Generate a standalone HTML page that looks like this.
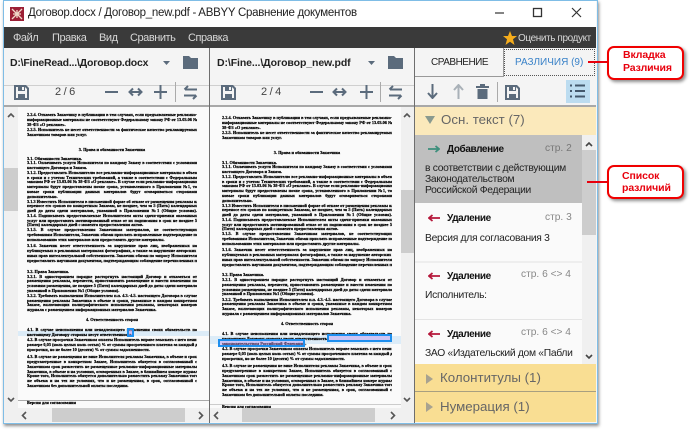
<!DOCTYPE html>
<html lang="ru"><head><meta charset="utf-8"><title>ABBYY</title>
<style>
html,body{margin:0;padding:0;background:#fff}
body{width:690px;height:430px;position:relative;overflow:hidden;font-family:"Liberation Sans",sans-serif}
div,span,svg{position:absolute}
#win{left:3px;top:0;width:593px;height:422px;background:#f5f5f5;border:1px solid #7fbde6;box-shadow:1px 2px 3px rgba(0,0,0,.45);box-sizing:content-box}
.t{white-space:nowrap}
.m{white-space:nowrap;top:31px;font-size:11px;line-height:15px;color:#d8d8d8;letter-spacing:-.45px}
.d{position:absolute;left:0;right:0;height:5px;font:bold 4.3px/5px "Liberation Serif",serif;color:#000;-webkit-text-stroke:.22px #000;white-space:nowrap;overflow:hidden;text-align:justify;text-align-last:justify}
.d.s{text-align-last:left}.d.h{text-align-last:center}
.ic{fill:#5b6b7c}
.st{stroke:#5b6b7c;stroke-width:2;fill:none}
.call{background:#fff;border:2px solid #f00000;border-radius:7px;box-shadow:2px 2px 3px rgba(0,0,0,.45);box-sizing:border-box;color:#e8000d;font:bold 10.5px/13px "Liberation Sans",sans-serif;text-align:left;letter-spacing:-.1px}
.it{font-size:10.3px;letter-spacing:-.3px;color:#222;white-space:nowrap}
.b{font-weight:bold;font-size:10px;letter-spacing:-.4px;color:#111}
.pg{font-size:10.2px;color:#888;white-space:nowrap}
.hd{font-size:13.3px;color:#666;white-space:nowrap}
.pn{font-size:11px;letter-spacing:-.3px;line-height:15px;color:#444;white-space:nowrap}
</style></head><body>
<svg width="0" height="0" style="left:0;top:0"><defs>
<g id="save"><path class="ic" fill-rule="evenodd" d="M0 0H12L15 3V15H0ZM2 2V13H13V4L11 2V6H4V2ZM8 2V5H10V2ZM4 9H11V13H4Z"/></g>
<g id="folder"><path class="ic" d="M0 0H6L8 2H15V13H0Z"/></g>
<g id="swap"><path class="st" d="M2 4.5H14M5 1L1.5 4.5M1 10.5H13M10 14L13.5 10.5"/></g>
<g id="ar"><path class="st" d="M2 5H13M5 1.5L1.5 5L5 8.5M10 1.5L13.500 5L10 8.5"/></g>
</defs></svg>

<div id="win"></div>
<!-- title bar -->
<div style="left:4px;top:1px;width:592px;height:26px;background:#fff"></div>
<svg style="left:10px;top:7px" width="14" height="14" viewBox="0 0 14 14"><rect width="14" height="14" fill="#9c1f35"/><path d="M2 2L12 12M12 2L2 12M7 3V11M3 7H11" stroke="#f0d8c8" stroke-width="1.3" fill="none"/></svg>
<div class="t" style="left:28px;top:6px;font-size:11.5px;letter-spacing:-.28px;line-height:15px;color:#222">Договор.docx / Договор_new.pdf - ABBYY Сравнение документов</div>
<svg style="left:490px;top:6px" width="100" height="14" viewBox="0 0 100 14"><path d="M5 7H14" stroke="#333" stroke-width="1.200"/><rect x="43.500" y="2.500" width="8" height="8" fill="none" stroke="#333" stroke-width="1.300"/><path d="M82 2L91 11M91 2L82 11" stroke="#333" stroke-width="1.200"/></svg>

<!-- menu -->
<div style="left:4px;top:27px;width:592px;height:21px;background:#3a3a3a"></div>
<div class="m" style="left:13px">Файл</div>
<div class="m" style="left:52px">Правка</div>
<div class="m" style="left:99px">Вид</div>
<div class="m" style="left:130px">Сравнить</div>
<div class="m" style="left:188px">Справка</div>
<svg style="left:503px;top:31px" width="14" height="14" viewBox="0 0 14 14"><path fill="#f6ad1c" d="M7 0L9 5H14L10 8.300L11.500 14L7 10.700L2.500 14L4 8.300L0 5H5Z"/></svg>
<div class="m" style="left:518px;font-size:10px;letter-spacing:-.4px">Оценить продукт</div>

<!-- address rows -->
<div style="left:4px;top:48px;width:592px;height:57px;background:#f4f4f4"></div>
<div style="left:4px;top:85px;width:410px;height:1px;background:#cfcfcf"></div>
<div style="left:4px;top:105px;width:592px;height:2px;background:#a8a8a8"></div>
<div style="left:209px;top:48px;width:1px;height:375px;background:#6e6e6e"></div>
<div style="left:414px;top:48px;width:1px;height:375px;background:#6e6e6e"></div>
<div class="t" style="left:10px;top:56px;font-weight:bold;font-size:10.5px;letter-spacing:-.22px;line-height:15px;color:#222">D:\FineRead...\Договор.docx</div>
<svg style="left:163px;top:61px" width="7" height="4"><path d="M0 0H7L3.500 4Z" fill="#5b6b7c"/></svg>
<svg style="left:183px;top:56px" width="15" height="13"><use href="#folder"/></svg>
<div class="t" style="left:217px;top:56px;font-weight:bold;font-size:10.5px;letter-spacing:-.1px;line-height:15px;color:#222">D:\Fine...\Договор_new.pdf</div>
<svg style="left:368px;top:61px" width="7" height="4"><path d="M0 0H7L3.500 4Z" fill="#5b6b7c"/></svg>
<svg style="left:388px;top:56px" width="15" height="13"><use href="#folder"/></svg>

<!-- toolbar left -->
<svg style="left:14px;top:85px" width="15" height="15"><use href="#save"/></svg>
<div class="pn" style="left:55px;top:85px">2 / 6</div>
<svg style="left:105px;top:87px" width="14" height="10"><path class="st" d="M0 5H13"/></svg>
<svg style="left:128px;top:87px" width="15" height="10"><use href="#ar"/></svg>
<svg style="left:154px;top:85px" width="13" height="14"><path class="st" d="M0 7H13M6.500 0V14"/></svg>
<div style="left:175px;top:82px;width:1px;height:20px;background:#aaa"></div>
<svg style="left:183px;top:85px" width="15" height="15"><use href="#swap"/></svg>
<!-- toolbar mid -->
<svg style="left:221px;top:85px" width="15" height="15"><use href="#save"/></svg>
<div class="pn" style="left:261px;top:85px">2 / 4</div>
<svg style="left:310px;top:87px" width="14" height="10"><path class="st" d="M0 5H13"/></svg>
<svg style="left:332px;top:87px" width="15" height="10"><use href="#ar"/></svg>
<svg style="left:360px;top:85px" width="13" height="14"><path class="st" d="M0 7H13M6.500 0V14"/></svg>
<div style="left:380px;top:82px;width:1px;height:20px;background:#aaa"></div>
<svg style="left:388px;top:85px" width="15" height="15"><use href="#swap"/></svg>

<!-- tabs -->
<div style="left:415px;top:48px;width:89px;height:29px;background:#f4f4f4;border-right:1px solid #999;border-bottom:1px solid #999;box-sizing:border-box"></div>
<div class="t" style="left:431px;top:55px;font-size:10px;letter-spacing:-.5px;line-height:15px;color:#222">СРАВНЕНИЕ</div>
<div style="left:504px;top:49px;width:91px;height:27px;border:1px dotted #555;box-sizing:border-box;background:#f4f4f4"></div>
<div class="t" style="left:515px;top:55px;font-size:10px;line-height:15px;color:#3a82c8">РАЗЛИЧИЯ (9)</div>
<!-- panel toolbar -->
<svg style="left:427px;top:84px" width="11" height="15"><path d="M5.500 0V13M1 9L5.500 14L10 9" fill="none" stroke="#5b6b7c" stroke-width="2"/></svg>
<svg style="left:453px;top:84px" width="11" height="15"><path d="M5.500 15V2M1 6L5.500 1L10 6" fill="none" stroke="#a9b1b8" stroke-width="2"/></svg>
<svg style="left:476px;top:84px" width="13" height="15"><path class="ic" d="M4 0H9V2H13V4H0V2H4ZM1.500 5H11.500V15H1.500Z"/></svg>
<div style="left:497px;top:82px;width:1px;height:20px;background:#aaa"></div>
<svg style="left:505px;top:85px" width="15" height="15"><use href="#save"/></svg>
<div style="left:566px;top:80px;width:24px;height:23px;background:#bcdcf0"></div>
<svg style="left:570px;top:84px" width="16" height="14"><path d="M0 1.500H2M5 1.500H15M5 7H15M0 7H2M0 12.500H2M5 12.500H15" stroke="#44586c" stroke-width="2"/></svg>

<!-- left doc -->
<div style="left:4px;top:107px;width:205px;height:315px;background:#fafafa"></div>
<div style="left:18px;top:331px;width:191px;height:5px;background:#dcecf8"></div>
<div style="left:18px;top:400px;width:191px;height:1px;background:#aaa"></div>
<div style="left:27px;top:0;width:170px;height:405px;overflow:hidden">
<div class="d" style="top:112px">2.2.4. Отказать Заказчику в публикации в тем случаях, если предъявляемые рекламно-</div>
<div class="d" style="top:117px">информационные материалы не соответствуют Федеральному закону РФ от 13.03.06 №</div>
<div class="d s" style="top:122px">38-ФЗ «О рекламе».</div>
<div class="d" style="top:127px">2.2.5. Исполнитель не несет ответственности за фактическое качество рекламируемых</div>
<div class="d s" style="top:132px">Заказчиком товаров или услуг.</div>
<div class="d h" style="top:147px">3. Права и обязанности Заказчика</div>
<div class="d s" style="top:156px">3.1. Обязанности Заказчика.</div>
<div class="d" style="top:160px">3.1.1. Оплачивать услуги Исполнителя по каждому Заказу в соответствии с условиями</div>
<div class="d s" style="top:165px">настоящего Договора и Заказа.</div>
<div class="d" style="top:170px">3.1.2. Предоставлять Исполнителю все рекламно-информационные материалы в объеме,</div>
<div class="d" style="top:175px">в сроки и с учетом Технических требований, а также в соответствии с Федеральным</div>
<div class="d" style="top:179px">законом РФ от 13.03.06 № 38-ФЗ «О рекламе». В случае если рекламно-информационные</div>
<div class="d" style="top:184px">материалы будут предоставлены позже срока, установленного в Приложении №1, то</div>
<div class="d" style="top:189px">новые сроки публикации данных материалов будут оговариваться сторонами</div>
<div class="d s" style="top:194px">дополнительно.</div>
<div class="d" style="top:199px">3.1.3 Известить Исполнителя в письменной форме об отказе от размещения рекламы или</div>
<div class="d" style="top:203px">переносе его сроков по конкретным Заказам, не позднее, чем за 5 (Пять) календарных</div>
<div class="d" style="top:208px">дней до даты сдачи материалов, указанной в Приложении №1 (Общие условия).</div>
<div class="d" style="top:213px">3.1.4. Подписывать предоставляемые Исполнителем акты сдачи-приемки оказанных</div>
<div class="d" style="top:218px">услуг или предоставить мотивированный отказ от их подписания в срок не позднее 5</div>
<div class="d s" style="top:222px">(Пяти) календарных дней с момента предоставления актов.</div>
<div class="d" style="top:227px">3.1.5. В случае предоставления Заказчиком материалов, не соответствующих</div>
<div class="d" style="top:232px">требованиям Исполнителя, Заказчик обязан прислать исправленные подтверждение по</div>
<div class="d s" style="top:237px">использованию этих материалов или предоставить другие материалы.</div>
<div class="d" style="top:243px">3.1.6. Заказчик несет ответственность за нарушение прав лиц, изображенных на</div>
<div class="d" style="top:248px">публикуемых в рекламных материалах фотографиях, а также за нарушение авторских и</div>
<div class="d" style="top:253px">иных прав интеллектуальной собственности. Заказчик обязан по запросу Исполнителя</div>
<div class="d" style="top:258px">предоставлять научными документам, подтверждающим соблюдение перечисленных прав.</div>
<div class="d s" style="top:269px">3.2. Права Заказчика.</div>
<div class="d" style="top:274px">3.2.1. В одностороннем порядке расторгнуть настоящий Договор и отказаться от</div>
<div class="d" style="top:278px">размещения рекламы, перенести, приостановить размещение и внести изменения по</div>
<div class="d" style="top:283px">условиям размещения, не позднее 5 (Пяти) календарных дней до даты сдачи материалов,</div>
<div class="d s" style="top:288px">указанной в Приложении №1 (Общие условия).</div>
<div class="d" style="top:293px">3.2.2. Требовать выполнения Исполнителем п.п. 4.3.-4.5. настоящего Договора в случае</div>
<div class="d" style="top:298px">размещения рекламы Заказчика в объеме и сроки, указанные в каждом конкретном</div>
<div class="d" style="top:302px">Заказе, включающих полиграфического исполнения рекламы, некоторых номеров</div>
<div class="d s" style="top:307px">журнала с размещением информационных материалов Заказчика.</div>
<div class="d h" style="top:317px">4. Ответственность сторон</div>
<div class="d" style="top:327px">4.1. В случае неисполнения или ненадлежащего исполнения своих обязательств по</div>
<div class="d s" style="top:332px">настоящему Договору стороны несут ответственность.</div>
<div class="d" style="top:337px">4.2. В случае просрочки Заказчиком оплаты Исполнитель вправе взыскать с него пени в</div>
<div class="d" style="top:342px">размере 0,03 (ноль целых ноль сотых) % от суммы просроченного платежа за каждый день</div>
<div class="d s" style="top:347px">просрочки, но не более 10 (десяти) % от суммы задолженности.</div>
<div class="d" style="top:354px">4.3. В случае не размещения не вине Исполнителя рекламы Заказчика, в объеме и сроки,</div>
<div class="d" style="top:359px">предусмотренные в конкретном Заказе, Исполнитель обязуется в согласованный с</div>
<div class="d" style="top:364px">Заказчиком срок разместить не размещенные рекламно-информационные материалы</div>
<div class="d" style="top:369px">Заказчика, в объеме и на условиях, оговоренных в Заказе, в ближайшем номере журнала.</div>
<div class="d" style="top:373px">Кроме того, Исполнитель обязуется дополнительно разместить рекламу Заказчика того</div>
<div class="d" style="top:378px">же объема и на тех же условиях, что и не размещенная, в срок, согласованный с</div>
<div class="d s" style="top:383px">Заказчиком без дополнительной оплаты последним.</div>
<div class="d s" style="top:400px">Версия для согласования</div>
</div>
<div style="left:127px;top:328px;width:7px;height:9px;border:2px solid #1f8fee;box-sizing:border-box;background:rgba(190,150,240,.5)"></div>
<!-- left scrollbars -->
<div style="left:4px;top:107px;width:14px;height:301px;background:#f0f0f0"></div>
<div style="left:4px;top:168px;width:14px;height:43px;background:#cdcdcd"></div>
<svg style="left:7px;top:112px" width="8" height="6"><path d="M1 5L4 2L7 5" fill="none" stroke="#555" stroke-width="1.600"/></svg>
<svg style="left:7px;top:397px" width="8" height="6"><path d="M1 1L4 4L7 1" fill="none" stroke="#555" stroke-width="1.600"/></svg>
<div style="left:4px;top:408px;width:205px;height:14px;background:#f0f0f0"></div>
<div style="left:52px;top:408px;width:133px;height:14px;background:#cdcdcd"></div>
<svg style="left:21px;top:411px" width="6" height="9"><path d="M5 1L1.500 4.500L5 8" fill="none" stroke="#555" stroke-width="1.600"/></svg>
<svg style="left:198px;top:411px" width="6" height="9"><path d="M1 1L4.500 4.500L1 8" fill="none" stroke="#555" stroke-width="1.600"/></svg>

<!-- mid doc -->
<div style="left:210px;top:107px;width:204px;height:315px;background:#fafafa"></div>
<div style="left:210px;top:336px;width:191px;height:8px;background:#dcecf8"></div>
<div style="left:210px;top:404px;width:191px;height:1px;background:#ccc"></div>
<div style="left:222px;top:0;width:170px;height:408px;overflow:hidden">
<div class="d" style="top:115px">2.2.4. Отказать Заказчику в публикации в тем случаях, если предъявляемые рекламно-</div>
<div class="d" style="top:120px">информационные материалы не соответствуют Федеральному закону РФ от 13.03.06 №</div>
<div class="d s" style="top:125px">38-ФЗ «О рекламе».</div>
<div class="d" style="top:130px">2.2.5. Исполнитель не несет ответственности за фактическое качество рекламируемых</div>
<div class="d s" style="top:135px">Заказчиком товаров или услуг.</div>
<div class="d h" style="top:150px">3. Права и обязанности Заказчика</div>
<div class="d s" style="top:160px">3.1. Обязанности Заказчика.</div>
<div class="d" style="top:164px">3.1.1. Оплачивать услуги Исполнителя по каждому Заказу в соответствии с условиями</div>
<div class="d s" style="top:169px">настоящего Договора и Заказа.</div>
<div class="d" style="top:174px">3.1.2. Предоставлять Исполнителю все рекламно-информационные материалы в объеме,</div>
<div class="d" style="top:179px">в сроки и с учетом Технических требований, а также в соответствии с Федеральным</div>
<div class="d" style="top:183px">законом РФ от 13.03.06 № 38-ФЗ «О рекламе». В случае если рекламно-информационные</div>
<div class="d" style="top:188px">материалы будут предоставлены позже срока, установленного в Приложении №1, то</div>
<div class="d" style="top:193px">новые сроки публикации данных материалов будут оговариваться сторонами</div>
<div class="d s" style="top:198px">дополнительно.</div>
<div class="d" style="top:203px">3.1.3 Известить Исполнителя в письменной форме об отказе от размещения рекламы или</div>
<div class="d" style="top:207px">переносе его сроков по конкретным Заказам, не позднее, чем за 5 (Пять) календарных</div>
<div class="d" style="top:212px">дней до даты сдачи материалов, указанной в Приложении №1 (Общие условия).</div>
<div class="d" style="top:217px">3.1.4. Подписывать предоставляемые Исполнителем акты сдачи-приемки оказанных</div>
<div class="d" style="top:222px">услуг или предоставить мотивированный отказ от их подписания в срок не позднее 5</div>
<div class="d s" style="top:226px">(Пяти) календарных дней с момента предоставления актов.</div>
<div class="d" style="top:231px">3.1.5. В случае предоставления Заказчиком материалов, не соответствующих</div>
<div class="d" style="top:236px">требованиям Исполнителя, Заказчик обязан прислать исправленные подтверждение по</div>
<div class="d s" style="top:241px">использованию этих материалов или предоставить другие материалы.</div>
<div class="d" style="top:247px">3.1.6. Заказчик несет ответственность за нарушение прав лиц, изображенных на</div>
<div class="d" style="top:252px">публикуемых в рекламных материалах фотографиях, а также за нарушение авторских и</div>
<div class="d" style="top:257px">иных прав интеллектуальной собственности. Заказчик обязан по запросу Исполнителя</div>
<div class="d" style="top:262px">предоставлять научными документам, подтверждающим соблюдение перечисленных прав.</div>
<div class="d s" style="top:272px">3.2. Права Заказчика.</div>
<div class="d" style="top:277px">3.2.1. В одностороннем порядке расторгнуть настоящий Договор и отказаться от</div>
<div class="d" style="top:282px">размещения рекламы, перенести, приостановить размещение и внести изменения по</div>
<div class="d" style="top:287px">условиям размещения, не позднее 5 (Пяти) календарных дней до даты сдачи материалов,</div>
<div class="d s" style="top:291px">указанной в Приложении №1 (Общие условия).</div>
<div class="d" style="top:297px">3.2.2. Требовать выполнения Исполнителем п.п. 4.3.-4.5. настоящего Договора в случае</div>
<div class="d" style="top:301px">размещения рекламы Заказчика в объеме и сроки, указанные в каждом конкретном</div>
<div class="d" style="top:306px">Заказе, включающих полиграфического исполнения рекламы, некоторых номеров</div>
<div class="d s" style="top:311px">журнала с размещением информационных материалов Заказчика.</div>
<div class="d h" style="top:321px">4. Ответственность сторон</div>
<div class="d" style="top:331px">4.1. В случае неисполнения или ненадлежащего исполнения своих обязательств по</div>
<div class="d s" style="top:336px">настоящему Договору стороны несут ответственность</div>
<div class="d s" style="top:341px">законодательством Российской Федерации.</div>
<div class="d" style="top:346px">4.2. В случае просрочки Заказчиком оплаты Исполнитель вправе взыскать с него пени в</div>
<div class="d" style="top:351px">размере 0,03 (ноль целых ноль сотых) % от суммы просроченного платежа за каждый день</div>
<div class="d s" style="top:356px">просрочки, но не более 10 (десяти) % от суммы задолженности.</div>
<div class="d" style="top:363px">4.3. В случае не размещения не вине Исполнителя рекламы Заказчика, в объеме и сроки,</div>
<div class="d" style="top:368px">предусмотренные в конкретном Заказе, Исполнитель обязуется в согласованный с</div>
<div class="d" style="top:373px">Заказчиком срок разместить не размещенные рекламно-информационные материалы</div>
<div class="d" style="top:378px">Заказчика, в объеме и на условиях, оговоренных в Заказе, в ближайшем номере журнала.</div>
<div class="d" style="top:382px">Кроме того, Исполнитель обязуется дополнительно разместить рекламу Заказчика того</div>
<div class="d" style="top:387px">же объема и на тех же условиях, что и не размещенная, в срок, согласованный с</div>
<div class="d s" style="top:392px">Заказчиком без дополнительной оплаты последним.</div>
<div class="d s" style="top:404px">Версия для согласования</div>
</div>
<div style="left:327px;top:334px;width:65px;height:8px;border:2px solid #1f8fee;box-sizing:border-box;background:rgba(190,150,240,.45)"></div>
<div style="left:218px;top:339px;width:87px;height:8px;border:2px solid #1f8fee;box-sizing:border-box;background:rgba(190,150,240,.45)"></div>
<!-- mid scrollbars -->
<div style="left:401px;top:107px;width:13px;height:301px;background:#f0f0f0"></div>
<div style="left:401px;top:190px;width:13px;height:63px;background:#cdcdcd"></div>
<svg style="left:403px;top:112px" width="8" height="6"><path d="M1 5L4 2L7 5" fill="none" stroke="#555" stroke-width="1.600"/></svg>
<svg style="left:403px;top:397px" width="8" height="6"><path d="M1 1L4 4L7 1" fill="none" stroke="#555" stroke-width="1.600"/></svg>
<div style="left:210px;top:408px;width:204px;height:14px;background:#f0f0f0"></div>
<div style="left:242px;top:408px;width:133px;height:14px;background:#cdcdcd"></div>
<svg style="left:213px;top:411px" width="6" height="9"><path d="M5 1L1.500 4.500L5 8" fill="none" stroke="#555" stroke-width="1.600"/></svg>
<svg style="left:390px;top:411px" width="6" height="9"><path d="M1 1L4.500 4.500L1 8" fill="none" stroke="#555" stroke-width="1.600"/></svg>

<!-- right panel -->
<div style="left:415px;top:107px;width:181px;height:28px;background:#fbe9bb"></div>
<svg style="left:425px;top:116px" width="10" height="8"><path d="M0 0H10L5 8Z" fill="#8a9a8f"/></svg>
<div class="hd" style="left:441px;top:111px;line-height:18px">Осн. текст (7)</div>
<div style="left:415px;top:135px;width:167px;height:229px;background:#fafafa"></div>
<div style="left:582px;top:135px;width:14px;height:229px;background:#f0f0f0"></div>
<div style="left:582px;top:150px;width:14px;height:85px;background:#cdcdcd"></div>
<svg style="left:585px;top:141px" width="8" height="6"><path d="M1 5L4 2L7 5" fill="none" stroke="#444" stroke-width="1.600"/></svg>
<svg style="left:585px;top:354px" width="8" height="6"><path d="M1 1L4 4L7 1" fill="none" stroke="#444" stroke-width="1.600"/></svg>

<div style="left:415px;top:135px;width:167px;height:68px;background:#bfbfbf"></div>
<svg style="left:428px;top:145px" width="12" height="8"><path d="M0 4H11M7.500 1L11 4L7.500 7" fill="none" stroke="#3d8f7c" stroke-width="1.800"/></svg>
<div class="it b" style="left:447px;top:142px;line-height:15px">Добавление</div>
<div class="pg" style="left:545px;top:141px;line-height:15px;color:#777">стр. 2</div>
<div class="it" style="left:425px;top:161px;line-height:15px">в соответствии с действующим</div>
<div class="it" style="left:425px;top:172px;line-height:15px">Законодательством</div>
<div class="it" style="left:425px;top:183px;line-height:15px">Российской Федерации</div>

<svg style="left:428px;top:214px" width="12" height="8"><path d="M12 4H1M4.500 1L1 4L4.500 7" fill="none" stroke="#b5173a" stroke-width="1.800"/></svg>
<div class="it b" style="left:447px;top:211px;line-height:15px">Удаление</div>
<div class="pg" style="left:545px;top:210px;line-height:15px">стр. 3</div>
<div class="it" style="left:425px;top:231px;line-height:15px">Версия для согласования 3</div>
<div style="left:415px;top:261px;width:167px;height:2px;background:#eee"></div>

<svg style="left:428px;top:272px" width="12" height="8"><path d="M12 4H1M4.500 1L1 4L4.500 7" fill="none" stroke="#b5173a" stroke-width="1.800"/></svg>
<div class="it b" style="left:447px;top:269px;line-height:15px">Удаление</div>
<div class="pg" style="left:521px;top:267px;line-height:15px">стр. 6 &lt;&gt; 4</div>
<div class="it" style="left:425px;top:288px;line-height:15px">Исполнитель:</div>
<div style="left:415px;top:319px;width:167px;height:1px;background:#e4e4e4"></div>

<svg style="left:428px;top:330px" width="12" height="8"><path d="M12 4H1M4.500 1L1 4L4.500 7" fill="none" stroke="#b5173a" stroke-width="1.800"/></svg>
<div class="it b" style="left:447px;top:327px;line-height:15px">Удаление</div>
<div class="pg" style="left:521px;top:325px;line-height:15px">стр. 6 &lt;&gt; 4</div>
<div class="it" style="left:425px;top:346px;line-height:15px">ЗАО «Издательский дом «Пабли</div>

<div style="left:415px;top:364px;width:181px;height:27px;background:#f9de93"></div>
<div style="left:415px;top:391px;width:181px;height:1px;background:#a89f80"></div>
<div style="left:415px;top:392px;width:181px;height:30px;background:#f9de93"></div>
<svg style="left:426px;top:374px" width="7" height="10"><path d="M0 0L7 5L0 10Z" fill="#a8a290"/></svg>
<div class="hd" style="left:440px;top:369px;line-height:18px">Колонтитулы (1)</div>
<svg style="left:426px;top:402px" width="7" height="10"><path d="M0 0L7 5L0 10Z" fill="#a8a290"/></svg>
<div class="hd" style="left:440px;top:398px;line-height:18px">Нумерация (1)</div>

<!-- callouts -->
<div style="left:588px;top:61px;width:20px;height:2px;background:#e8000d"></div>
<div class="call" style="left:607px;top:46px;width:77px;height:34px;padding:1px 0 0 14px">Вкладка<br>Различия</div>
<div style="left:587px;top:181px;width:21px;height:2px;background:#e8000d"></div>
<div class="call" style="left:607px;top:165px;width:77px;height:34px;padding:3px 0 0 13px;line-height:12px">Список<br>различий</div>
</body></html>
